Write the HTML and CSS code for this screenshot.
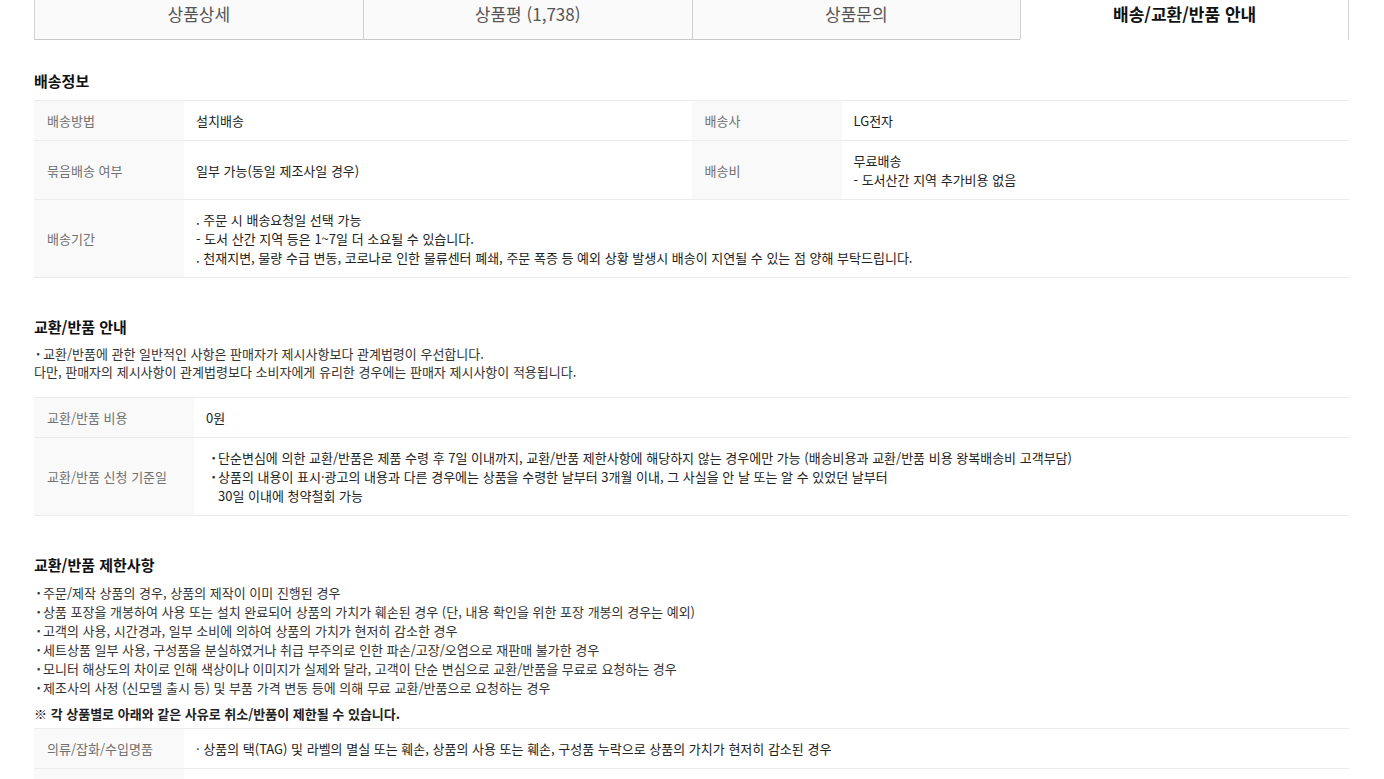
FILE: index.html
```html
<!DOCTYPE html>
<html lang="ko">
<head>
<meta charset="UTF-8">
<meta name="viewport" content="width=device-width, initial-scale=1.0">
<title>배송/교환/반품 안내</title>
<link rel="stylesheet" href="styles.css">
</head>
<body>
<div class="wrap">
    <ul class="tabs">
        <li class="tab">상품상세</li>
        <li class="tab">상품평 (1,738)</li>
        <li class="tab">상품문의</li>
        <li class="tab active">배송/교환/반품 안내</li>
    </ul>

    <h3 class="sec-title first">배송정보</h3>
    <table class="info-table">
        <colgroup>
            <col class="col-label">
            <col>
            <col class="col-label">
            <col>
        </colgroup>
        <tr>
            <th>배송방법</th>
            <td>설치배송</td>
            <th>배송사</th>
            <td>LG전자</td>
        </tr>
        <tr>
            <th>묶음배송 여부</th>
            <td>일부 가능(동일 제조사일 경우)</td>
            <th>배송비</th>
            <td>무료배송<br>- 도서산간 지역 추가비용 없음</td>
        </tr>
        <tr>
            <th>배송기간</th>
            <td colspan="3">
                . 주문 시 배송요청일 선택 가능<br>
                - 도서 산간 지역 등은 1~7일 더 소요될 수 있습니다.<br>
                . 천재지변, 물량 수급 변동, 코로나로 인한 물류센터 폐쇄, 주문 폭증 등 예외 상황 발생시 배송이 지연될 수 있는 점 양해 부탁드립니다.
            </td>
        </tr>
    </table>

    <h3 class="sec-title">교환/반품 안내</h3>
    <div class="intro">
        <span class="dot">·</span>교환/반품에 관한 일반적인 사항은 판매자가 제시사항보다 관계법령이 우선합니다.<br>
        다만, 판매자의 제시사항이 관계법령보다 소비자에게 유리한 경우에는 판매자 제시사항이 적용됩니다.
    </div>
    <table class="info-table wide-label">
        <colgroup>
            <col class="col-label">
            <col>
        </colgroup>
        <tr>
            <th>교환/반품 비용</th>
            <td>0원</td>
        </tr>
        <tr>
            <th>교환/반품 신청 기준일</th>
            <td>
                <ul class="cell-list">
                    <li>단순변심에 의한 교환/반품은 제품 수령 후 7일 이내까지, 교환/반품 제한사항에 해당하지 않는 경우에만 가능 (배송비용과 교환/반품 비용 왕복배송비 고객부담)</li>
                    <li>상품의 내용이 표시·광고의 내용과 다른 경우에는 상품을 수령한 날부터 3개월 이내, 그 사실을 안 날 또는 알 수 있었던 날부터<br>30일 이내에 청약철회 가능</li>
                </ul>
            </td>
        </tr>
    </table>

    <h3 class="sec-title">교환/반품 제한사항</h3>
    <ul class="dot-list">
        <li>주문/제작 상품의 경우, 상품의 제작이 이미 진행된 경우</li>
        <li>상품 포장을 개봉하여 사용 또는 설치 완료되어 상품의 가치가 훼손된 경우 (단, 내용 확인을 위한 포장 개봉의 경우는 예외)</li>
        <li>고객의 사용, 시간경과, 일부 소비에 의하여 상품의 가치가 현저히 감소한 경우</li>
        <li>세트상품 일부 사용, 구성품을 분실하였거나 취급 부주의로 인한 파손/고장/오염으로 재판매 불가한 경우</li>
        <li>모니터 해상도의 차이로 인해 색상이나 이미지가 실제와 달라, 고객이 단순 변심으로 교환/반품을 무료로 요청하는 경우</li>
        <li>제조사의 사정 (신모델 출시 등) 및 부품 가격 변동 등에 의해 무료 교환/반품으로 요청하는 경우</li>
    </ul>
    <p class="notice">※ 각 상품별로 아래와 같은 사유로 취소/반품이 제한될 수 있습니다.</p>
    <table class="info-table">
        <colgroup>
            <col class="col-label">
            <col>
        </colgroup>
        <tr>
            <th>의류/잡화/수입명품</th>
            <td>· 상품의 택(TAG) 및 라벨의 멸실 또는 훼손, 상품의 사용 또는 훼손, 구성품 누락으로 상품의 가치가 현저히 감소된 경우</td>
        </tr>
        <tr>
            <th>계절상품/식품/화장품</th>
            <td>· 신선냉동 식품의 단순변심의 경우</td>
        </tr>
    </table>
</div>
</body>
</html>
```

FILE: styles.css
```css
body {
    font-family: 'Noto Sans CJK KR', 'Noto Sans', sans-serif;
    background-color: #ffffff;
    color: #333;
    margin: 0;
    padding: 0;
}
.wrap {
    margin: 0 35px 0 34px;
    padding-bottom: 40px;
}
.tabs {
    display: grid;
    grid-template-columns: repeat(4, 1fr);
    list-style: none;
    margin: 0;
    padding: 0;
}
.tab {
    height: 30px;
    line-height: 28px;
    padding-bottom: 9px;
    text-align: center;
    font-size: 17px;
    color: #555;
    background-color: #fafafa;
    border-left: 1px solid #d0d0d0;
    border-bottom: 1px solid #c8c8c8;
}
.tab.active {
    background-color: #ffffff;
    color: #111;
    font-weight: bold;
    border-right: 1px solid #d0d0d0;
    border-bottom-color: transparent;
}
.sec-title {
    font-size: 15px;
    font-weight: bold;
    color: #111;
    line-height: 20px;
    margin: 39px 0 8px;
}
.sec-title.first {
    margin-top: 31px;
    margin-bottom: 9px;
}
.info-table {
    width: 100%;
    table-layout: fixed;
    border-collapse: collapse;
    border-top: 1px solid #ececec;
    font-size: 13px;
    line-height: 19px;
}
.info-table .col-label {
    width: 150px;
}
.info-table.wide-label .col-label {
    width: 160px;
}
.info-table tr {
    border-bottom: 1px solid #ececec;
}
.info-table th {
    background-color: #f9f9f9;
    color: #707070;
    font-weight: normal;
    text-align: left;
    padding: 10px 13px;
}
.info-table td {
    color: #222;
    padding: 10px 11px 10px 12px;
    vertical-align: middle;
}
.intro {
    font-size: 13px;
    line-height: 18px;
    color: #333;
    margin-bottom: 16px;
}
.dot {
    display: inline-block;
    width: 8px;
    margin-right: 1px;
    text-align: center;
    font-weight: bold;
}
.cell-list, .dot-list {
    list-style: none;
    margin: 0;
    padding: 0;
}
.cell-list li {
    padding-left: 12px;
}
.cell-list li::before,
.dot-list li::before {
    content: "·";
    display: inline-block;
    width: 9px;
    margin-left: -9px;
    text-align: center;
    font-weight: bold;
}
.dot-list {
    font-size: 13px;
    line-height: 19px;
    margin-top: 5px;
}
.dot-list li {
    padding-left: 9px;
}
.notice {
    font-size: 13px;
    font-weight: bold;
    line-height: 19px;
    color: #222;
    margin: 7px 0 5px;
}
```
